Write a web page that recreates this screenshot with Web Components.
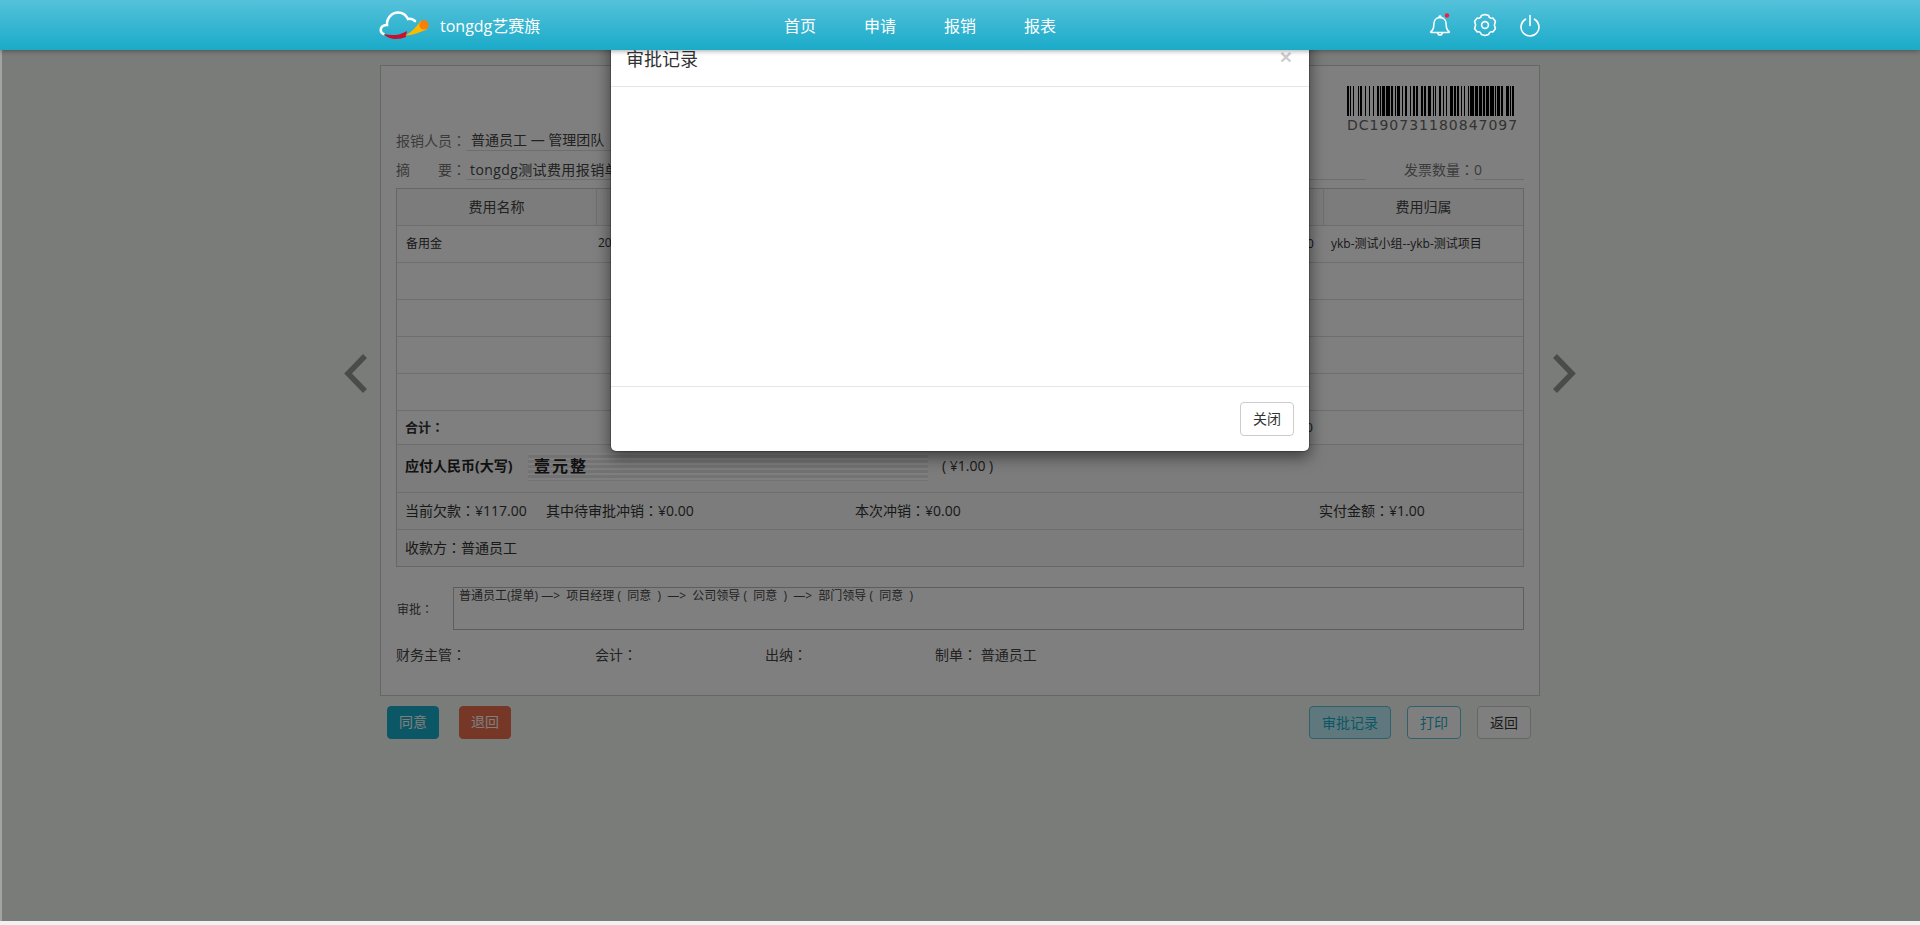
<!DOCTYPE html>
<html lang="zh"><head><meta charset="utf-8"><title>审批记录</title>
<style>
html,body{margin:0;height:925px;overflow:hidden;background:#f1f1f1;font-family:"Open Sans","Noto Sans CJK SC",sans-serif;color:#444;font-size:14px;text-spacing-trim:space-all}
</style></head><body>
<bill-app></bill-app>
<script>
const COLON='<span lang="zh-Hant" style="font-family:\'Noto Sans CJK TC\'">：</span>';
function def(name, css, html, init){
  customElements.define(name, class extends HTMLElement{
    constructor(){super();const r=this.attachShadow({mode:'open'});r.innerHTML='<style>'+css+'</style>'+html.replace(/：/g,COLON);if(init)init(r,this);}
  });
}
def('top-bar',`
:host{display:flex;align-items:center;height:50px;background:linear-gradient(#55c1da,#1aabc9);color:#fff;box-shadow:0 1px 5px rgba(0,0,0,.35);position:relative;z-index:30;box-sizing:border-box;padding-left:380px}
.brand{display:flex;align-items:center;width:404px}
.brand svg{width:70px;height:50px;margin-left:-10px}
.brand span{font-size:16px;margin-left:0}
nav{display:flex;gap:48px;font-size:16px;width:645px}
.ic{display:flex;align-items:center}
svg.i{fill:none;stroke:#fff;stroke-width:1.6;stroke-linecap:round;stroke-linejoin:round}
`,`
<div class="brand"><svg viewBox="0 0 70 50"><path d="M13.5 34C9 31.5 10 25 17 25C16.5 18 22 12.5 28 12.5C33 12.5 36 15 38 19C40 18.5 43 19 45 21" fill="none" stroke="#fff" stroke-width="2.6" stroke-linecap="round"/><path d="M14 34C21 36 30 35.5 37 31L36 37C29 40 18 40 14 34Z" fill="#c8102e"/><path d="M35 35.5C42 32 47 26 51 20.5L57 29.5C50 32 43 35.5 35 35.5Z" fill="#fdb900"/><circle cx="54" cy="25" r="4.7" fill="#f77f0a"/></svg><span>tongdg艺赛旗</span></div>
<nav><span>首页</span><span>申请</span><span>报销</span><span>报表</span></nav>
<div class="ic">
<svg class="i" width="22" height="24" viewBox="0 0 22 24" style="margin-right:22px"><path d="M2 18.5C4.5 17 4.8 14.5 4.8 11.5C4.8 7.5 7.2 4.5 11 4.5C14.8 4.5 17.2 7.5 17.2 11.5C17.2 14.5 17.5 17 20 18.5C20.6 19 20.3 19.5 19.7 19.5H2.3C1.7 19.5 1.4 19 2 18.5Z"/><path d="M8.8 19.8C9 21.3 9.9 22 11 22C12.1 22 13 21.3 13.2 19.8"/><path d="M10 4.4L10.5 3H11.5L12 4.4"/><circle cx="18" cy="2.5" r="2.2" fill="#f0213f" stroke="none"/></svg>
<svg class="i" width="24" height="24" viewBox="0 0 24 24" style="margin-right:22px"><path d="M8.3 2.6L12 1.4L15.7 2.6C15.9 4.6 17.9 5.8 19.8 5L22.4 8.2L21.4 12L22.4 15.8L19.8 19C17.9 18.2 15.9 19.4 15.7 21.4L12 22.6L8.3 21.4C8.1 19.4 6.1 18.2 4.2 19L1.6 15.8L2.6 12L1.6 8.2L4.2 5C6.1 5.8 8.1 4.6 8.3 2.6Z"/><circle cx="12" cy="12" r="3.4"/></svg>
<svg class="i" width="22" height="24" viewBox="0 0 22 24"><path d="M6.5 6.2A9 9 0 1 0 15.5 6.2"/><path d="M11 2.5V12.5"/></svg>
</div>`);

def('bar-code',`
:host{display:block;width:172px;height:35px;margin-left:auto;margin-right:5px}
svg{display:block}
div{font:14px/18px "DejaVu Sans","Liberation Sans",sans-serif;letter-spacing:1px;color:#666;white-space:nowrap;margin-top:0}
`,`<svg width="167" height="30" viewBox="0 0 167 30" shape-rendering="crispEdges"></svg><div>DC190731180847097</div>`,(r)=>{
  // Code 128: start B, D, C, code C, 19 07 31 18 08 47 09, code B, 7, check, stop
  const seq=['211214','112313','131321','113141','221132','122312','212321','223211','132212','133121','221213','114131','312131','411131','2331112'];
  let x=0,s='';
  seq.forEach(c=>{[...c].forEach((w,i)=>{w=+w;if(i%2==0)s+=`<rect x="${x}" y="0" width="${w}" height="30"/>`;x+=w;});});
  r.querySelector('svg').innerHTML=s;
});

def('info-row',`
:host{display:flex;padding-top:9px;line-height:var(--lh,20px)}
.l{width:70px;color:#777;flex:none}
.v{flex:none;width:var(--w,440px);border-bottom:1px solid #ddd;padding-left:var(--pl,5px);box-sizing:border-box;color:#444;white-space:nowrap;overflow:hidden;letter-spacing:var(--ls,0)}
`,`<div class="l"><slot name="label"></slot></div><div class="v"><slot></slot></div><slot name="extra"></slot>`);

def('fee-table',`
:host{display:block;width:1128px;box-sizing:border-box;border:1px solid #ccc;font-size:12px;color:#333}
.row{display:flex;align-items:center;border-bottom:1px solid #ddd;height:37px;box-sizing:border-box;background:#fff;padding-bottom:3px}
.row:last-child{border-bottom:0;height:36px}
.h{height:37px;font-size:14px;background:#f7f8f7;color:#444;align-items:stretch;padding-bottom:0}
.h div{display:flex;align-items:center;justify-content:center;border-right:1px solid #ddd;padding-bottom:2px}
.h div:last-child{border-right:0}
.c1{width:199px;flex:none}.c2{width:726px;flex:none}.c3{flex:1}
.d .c1{padding-left:9px;box-sizing:border-box}
.d .c2{display:flex;justify-content:space-between;padding-right:8px;box-sizing:border-box;font-size:13px}
.d .c2 span:first-child{font-size:12px}
.d .c3{padding-left:9px}
.s{font-size:14px;background:#f7f8f7;padding-left:8px;gap:0}
.tot{height:34px;background:#fff;padding-left:8px;padding-bottom:2px}
.tot b{font-size:13px;width:190px;color:#333}
.tot .n{width:726px;text-align:right;padding-right:8px;box-sizing:border-box;font-size:13px}
.cap{height:48px;padding-left:8px;align-items:flex-start;padding-bottom:0}
.cap b{width:123px;flex:none;margin-top:11px;line-height:20px;color:#222;white-space:nowrap}
.stripes{width:400px;height:28px;margin-top:8px;flex:none;box-sizing:border-box;padding-left:6px;
background:repeating-linear-gradient(#fff 0 2px,#e9e7e8 2px 5px);font:700 16px/24px "Noto Sans CJK SC",sans-serif;letter-spacing:2px;color:#222}
.cap span{margin-left:14px;margin-top:11px;line-height:20px;font-size:14px}
.f span{flex:none}
`,`
<div class="row h"><div class="c1">费用名称</div><div class="c2">费用内容</div><div class="c3">费用归属</div></div>
<div class="row d"><div class="c1">备用金</div><div class="c2"><span style="margin-left:2px">2019-07-31</span><span>1.00</span></div><div class="c3">ykb-测试小组--ykb-测试项目</div></div>
<div class="row"></div><div class="row"></div><div class="row"></div><div class="row"></div>
<div class="row tot"><b>合计：</b><div class="n">1.00</div></div>
<div class="row s cap"><b>应付人民币(大写)</b><div class="stripes">壹元整</div><span>( ¥1.00 )</span></div>
<div class="row s f" style="padding-left:8px"><span style="width:141px">当前欠款：¥117.00</span><span style="width:309px">其中待审批冲销：¥0.00</span><span style="width:464px">本次冲销：¥0.00</span><span>实付金额：¥1.00</span></div>
<div class="row s" style="padding-left:8px">收款方：普通员工</div>`);

def('approve-line',`
:host{display:flex;align-items:center;font-size:12px;margin-top:20px;width:1128px;color:#444}
.t{width:57px;flex:none;padding-left:1px;box-sizing:border-box}
.b{flex:1;height:43px;border:1px solid #bbb;box-sizing:border-box;padding:0 5px;line-height:16px;white-space:pre}
`,`<div class="t">审批：</div><div class="b"><slot></slot></div>`);

def('sign-row',`
:host{display:flex;margin-top:14px;height:20px;line-height:20px;color:#444}
span.w:nth-of-type(1){width:199px}span.w:nth-of-type(2){width:170px}span.w:nth-of-type(3){width:170px}
`,`<span class="w">财务主管：</span><span class="w">会计：</span><span class="w">出纳：</span><span class="w">制单：&nbsp;普通员工</span>`);

def('ui-btn',`
:host{display:inline-flex;align-items:center;justify-content:center;height:34px;box-sizing:border-box;padding:0 12px 2px;border:1px solid #ccc;border-radius:4px;font-size:14px;color:#333;background:#fff;white-space:nowrap}
:host([k=a]){background:#19aecb;border-color:#19aecb;color:#fff;padding:0 11px 3px}
:host([k=b]){background:#ec6e4e;border-color:#ec6e4e;color:#fff;padding:0 11px 3px}
:host([k=c]){background:#bff0fb;border-color:#5cc3da;color:#19aecb}
:host([k=d]){border-color:#5cc3da;color:#19aecb}
`,`<slot></slot>`);

def('bill-card',`
:host{display:block;width:1160px;box-sizing:border-box;height:631px;border:1px solid #ccc;background:#fff;padding:20px 15px 0}
`,`<slot></slot>`);

def('action-bar',`
:host{display:flex;width:1160px;box-sizing:border-box;margin-top:10px;padding:0 9px 0 7px}
.l,.r{display:flex}.l{gap:20px}.r{gap:16px;margin-left:auto}
::slotted(ui-btn){height:33px}
`,`<div class="l"><slot name="l"></slot></div><div class="r"><slot name="r"></slot></div>`);

def('modal-box',`
:host{position:absolute;left:610px;top:30px;width:700px;box-sizing:border-box;background:#fff;border:1px solid rgba(0,0,0,.2);border-radius:6px;box-shadow:0 5px 15px rgba(0,0,0,.5);background-clip:padding-box;color:#333;z-index:20;display:block}
.h{display:flex;justify-content:space-between;padding:15px;border-bottom:1px solid #e5e5e5;height:56px;box-sizing:border-box}
.h span{font-size:18px;line-height:26px}
.x{font:700 21px/21px "Liberation Sans",sans-serif;color:#000;opacity:.2;margin-right:2px}
.b{height:300px;box-sizing:border-box;border-bottom:1px solid #e5e5e5}
.f{display:flex;justify-content:flex-end;padding:15px}
`,`<div class="h"><span>审批记录</span><i class="x" style="font-style:normal">×</i></div><div class="b"></div><div class="f"><ui-btn>关闭</ui-btn></div>`);

def('bill-app',`
:host{display:block;position:relative;width:1920px;height:925px;overflow:hidden;background:#f5f8f5;}
.scrim{position:absolute;left:2px;right:0;top:0;bottom:4px;background:rgba(0,0,0,.5);z-index:10}
.edgeL{position:absolute;left:0;top:0;bottom:4px;width:2px;background:#a3a3a3;z-index:11}
.edgeB{position:absolute;left:0;right:0;bottom:0;height:4px;background:#f1f1f1;z-index:11}
main{width:1160px;margin:15px auto 0;position:relative}
.arrow{position:absolute;top:286px;fill:none;stroke:#949694;stroke-width:5.5}
`,`
<top-bar></top-bar>
<main>
<svg class="arrow" style="left:-36px" width="26" height="46" viewBox="0 0 26 46"><path d="M21 5L4 22.5L21 40"/></svg>
<svg class="arrow" style="left:1170px" width="26" height="46" viewBox="0 0 26 46"><path d="M5 5L22 22.5L5 40"/></svg>
<bill-card>
<div style="display:flex"><bar-code></bar-code></div>
<info-row style="--w:500px;"><span slot="label">报销人员：</span>普通员工 — 管理团队</info-row>
<info-row style="--w:900px;--pl:4px;--lh:19px;--ls:.4px;margin-bottom:8px"><span slot="label">摘&emsp;&emsp;要：</span>tongdg测试费用报销单<span slot="extra" style="display:flex;margin-left:38px;color:#777;letter-spacing:0"><span style="width:70px">发票数量：</span><span style="width:50px;border-bottom:1px solid #ddd">0</span></span></info-row>
<fee-table></fee-table>
<approve-line>普通员工(提单) —&gt;  项目经理 (  同意  )  —&gt;  公司领导 (  同意  )  —&gt;  部门领导 (  同意  )</approve-line>
<sign-row></sign-row>
</bill-card>
<action-bar><ui-btn k="a" slot="l">同意</ui-btn><ui-btn k="b" slot="l">退回</ui-btn><ui-btn k="c" slot="r">审批记录</ui-btn><ui-btn k="d" slot="r">打印</ui-btn><ui-btn slot="r">返回</ui-btn></action-bar>
</main>
<div class="scrim"></div><div class="edgeL"></div><div class="edgeB"></div>
<modal-box></modal-box>`);
</script></body></html>
